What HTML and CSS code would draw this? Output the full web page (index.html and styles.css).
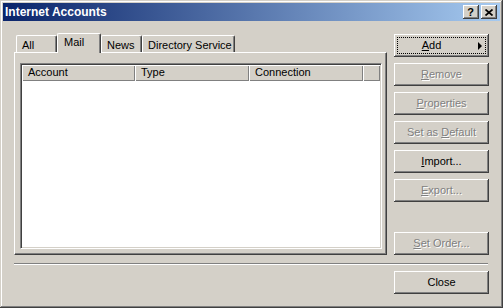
FILE: index.html
```html
<!DOCTYPE html>
<html lang="en">

<head>
  <meta charset="UTF-8">
  <title>Internet Accounts</title>
  <link rel="stylesheet" href="styles.css">
</head>

<body>
  <div class="window">
    <header class="titlebar">
      <span class="title">Internet Accounts</span>
      <div class="caption-btns">
        <span class="cap-btn cap-help">?</span>
        <span class="cap-btn cap-close">
          <svg width="8" height="7" viewBox="0 0 8 7">
            <path d="M0.5 0.5 L7.5 6.5 M7.5 0.5 L0.5 6.5" stroke="#000" stroke-width="1.7" fill="none"/>
          </svg>
        </span>
      </div>
    </header>

    <section class="content">
      <div class="main">
        <div class="tabctl">
          <div class="tabs">
            <span class="tab tab-all">All</span>
            <span class="tab tab-mail active">Mail</span>
            <span class="tab tab-news">News</span>
            <span class="tab tab-dir">Directory Service</span>
          </div>
          <div class="panel">
            <div class="listview">
              <div class="lv-header">
                <span class="col col-account">Account</span>
                <span class="col col-type">Type</span>
                <span class="col col-conn">Connection</span>
                <span class="col col-fill"></span>
              </div>
              <div class="lv-body"></div>
            </div>
          </div>
        </div>

        <div class="actions">
          <button class="btn btn-add"><span class="btn-label"><u>A</u>dd</span><span class="arrow"></span></button>
          <button class="btn" disabled><u>R</u>emove</button>
          <button class="btn" disabled><u>P</u>roperties</button>
          <button class="btn" disabled>Set as <u>D</u>efault</button>
          <button class="btn"><u>I</u>mport...</button>
          <button class="btn" disabled><u>E</u>xport...</button>
          <button class="btn btn-order" disabled><u>S</u>et Order...</button>
        </div>
      </div>

      <div class="separator"></div>

      <div class="footer">
        <button class="btn">Close</button>
      </div>
    </section>
  </div>
</body>

</html>
```

FILE: styles.css
```css
/* ---- General ---- */

:root {
  --face: #d4d0c8;
  --shadow: #808080;
  --dark: #404040;
  --light: #ffffff;
}

body {
  margin: 0;
  background: var(--face);
  font-family: "Liberation Sans", Arial, sans-serif;
  font-size: 11px;
  color: #000;
}

.window {
  width: 503px;
  height: 308px;
  box-sizing: border-box;
  padding: 3px;
  background: var(--face);
  box-shadow: inset -1px -1px var(--dark), inset 1px 1px var(--face),
              inset -2px -2px var(--shadow), inset 2px 2px var(--light);
}

/* ---- Title bar ---- */

.titlebar {
  display: flex;
  align-items: center;
  justify-content: space-between;
  height: 18px;
  padding: 0 3px 0 2px;
  background: linear-gradient(to right, #0a246a, #a6caf0);
}

.title {
  color: #fff;
  font-weight: bold;
  font-size: 12px;
  line-height: 18px;
}

.caption-btns {
  display: flex;
  gap: 2px;
}

.cap-btn {
  display: flex;
  align-items: center;
  justify-content: center;
  width: 16px;
  height: 14px;
  box-sizing: border-box;
  background: var(--face);
  box-shadow: inset -1px -1px var(--dark), inset 1px 1px var(--light),
              inset -2px -2px var(--shadow);
  font-weight: bold;
  font-size: 11px;
  line-height: 14px;
}

.cap-help {
  padding-right: 1px;
}

.cap-close svg {
  display: block;
  margin-right: 1px;
}

/* ---- Content ---- */

.content {
  padding: 12px 11px 0 11px;
}

.main {
  display: flex;
  gap: 7px;
}

/* ---- Tabs ---- */

.tabctl {
  width: 374px;
}

.tabs {
  display: flex;
  align-items: flex-end;
  height: 19px;
  padding-left: 2px;
}

.tab {
  height: 17px;
  box-sizing: border-box;
  padding: 3px 0 0 5px;
  line-height: 13px;
  background: var(--face);
  border-top: 1px solid var(--light);
  border-left: 1px solid var(--light);
  border-right: 1px solid var(--dark);
  border-radius: 2px 2px 0 0;
  box-shadow: inset -1px 0 var(--shadow);
}

.tab.active {
  position: relative;
  z-index: 1;
  height: 20px;
  margin-bottom: -1px;
  padding: 2px 0 0 6px;
}

.tab-all  { width: 41px; }
.tab-mail { width: 44px; }
.tab-news { width: 41px; }
.tab-dir  { width: 93px; }

.panel {
  height: 203px;
  box-sizing: border-box;
  padding: 10px 0 0 5px;
  border-top: 1px solid var(--light);
  border-left: 1px solid var(--light);
  border-right: 1px solid var(--dark);
  border-bottom: 1px solid var(--dark);
  box-shadow: inset -1px -1px var(--shadow);
}

/* ---- List view ---- */

.listview {
  display: flex;
  flex-direction: column;
  width: 362px;
  height: 186px;
  box-sizing: border-box;
  padding: 1px;
  background: #fff;
  border-top: 1px solid var(--shadow);
  border-left: 1px solid var(--shadow);
  border-right: 1px solid var(--light);
  border-bottom: 1px solid var(--light);
  box-shadow: inset 1px 1px var(--dark), inset -1px -1px var(--face);
}

.lv-header {
  display: flex;
  height: 16px;
}

.col {
  box-sizing: border-box;
  padding-left: 6px;
  line-height: 15px;
  background: var(--face);
  box-shadow: inset 1px 1px var(--light), inset -1px -1px var(--shadow);
}

.col-account { width: 113px; }
.col-type    { width: 114px; }
.col-conn    { width: 114px; }
.col-fill    { flex: 1; }

.lv-body {
  flex: 1;
}

/* ---- Buttons ---- */

.actions {
  display: flex;
  flex-direction: column;
  gap: 6px;
  padding-top: 1px;
}

.btn {
  display: block;
  width: 95px;
  height: 23px;
  padding: 0;
  border: none;
  background: var(--face);
  font-family: "Liberation Sans", Arial, sans-serif;
  font-size: 11px;
  line-height: 23px;
  text-align: center;
  color: #000;
  box-shadow: inset -1px -1px var(--dark), inset 1px 1px var(--light),
              inset -2px -2px var(--shadow), inset 2px 2px var(--face);
}

.btn:disabled {
  color: var(--shadow);
  text-shadow: 1px 1px var(--light);
}

.btn u {
  text-underline-offset: 1px;
}

.btn-add {
  display: flex;
  align-items: center;
  padding: 0 7px 0 2px;
  outline: 1px dotted #000;
  outline-offset: -4px;
}

.btn-label {
  flex: 1;
  text-align: center;
}

.arrow {
  width: 0;
  height: 0;
  margin-left: 11px;
  border-top: 4px solid transparent;
  border-bottom: 4px solid transparent;
  border-left: 4px solid #000;
}

.btn-order {
  margin-top: auto;
}

/* ---- Footer ---- */

.separator {
  height: 0;
  margin: 8px 1px 0 0;
  border-top: 1px solid var(--shadow);
  border-bottom: 1px solid var(--light);
}

.footer {
  display: flex;
  justify-content: flex-end;
  margin-top: 6px;
}
```
